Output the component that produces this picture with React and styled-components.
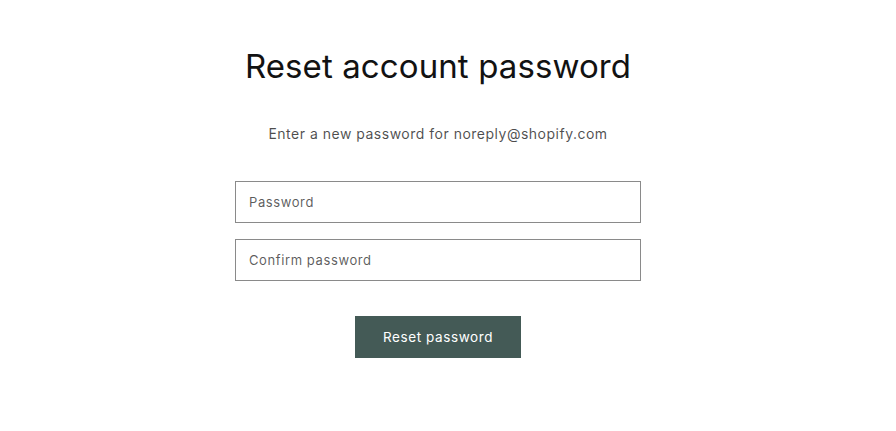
import React from 'react';
import styled, { createGlobalStyle } from 'styled-components';

const GlobalStyle = createGlobalStyle`
  html, body {
    margin: 0;
    padding: 0;
    background: #fff;
  }
  body {
    font-family: Inter, "Liberation Sans", sans-serif;
    color: rgba(18, 18, 18, 0.75);
  }
`;

const Shell = styled.div`
  display: flex;
  justify-content: center;
  padding-right: 20px;
`;

const Page = styled.main`
  width: 406px;
  padding-top: 44px;
  display: flex;
  flex-direction: column;
  align-items: center;
  text-align: center;
`;

const Title = styled.h1`
  margin: 0;
  font-size: 33px;
  font-weight: 400;
  line-height: 44px;
  color: #121212;
  letter-spacing: 0.1px;
  white-space: nowrap;
`;

const Lead = styled.p`
  margin: 36px 0 0;
  font-size: 14px;
  line-height: 20px;
  letter-spacing: 0.5px;
  white-space: nowrap;
`;

const Form = styled.form`
  width: 100%;
  margin-top: 37px;
  display: flex;
  flex-direction: column;
  gap: 16px;
`;

const Field = styled.input`
  box-sizing: border-box;
  width: 100%;
  height: 42px;
  padding: 0 13px;
  border: 1px solid #8a8a8a;
  border-radius: 0;
  font-family: inherit;
  font-size: 13px;
  letter-spacing: 0.6px;
  color: #121212;
  outline: none;
  &::placeholder {
    color: rgba(18, 18, 18, 0.7);
  }
`;

const Submit = styled.button`
  align-self: center;
  margin-top: 19px;
  width: 166px;
  height: 42px;
  border: 0;
  border-radius: 0;
  background: #445a56;
  color: #fff;
  font-family: inherit;
  font-size: 13.5px;
  letter-spacing: 0.6px;
  cursor: pointer;
`;

export default function App() {
  return (
    <>
      <GlobalStyle />
      <Shell>
        <Page>
          <Title>Reset account password</Title>
          <Lead>Enter a new password for noreply@shopify.com</Lead>
          <Form onSubmit={(e) => e.preventDefault()}>
            <Field type="password" placeholder="Password" />
            <Field type="password" placeholder="Confirm password" />
            <Submit type="submit">Reset password</Submit>
          </Form>
        </Page>
      </Shell>
    </>
  );
}
